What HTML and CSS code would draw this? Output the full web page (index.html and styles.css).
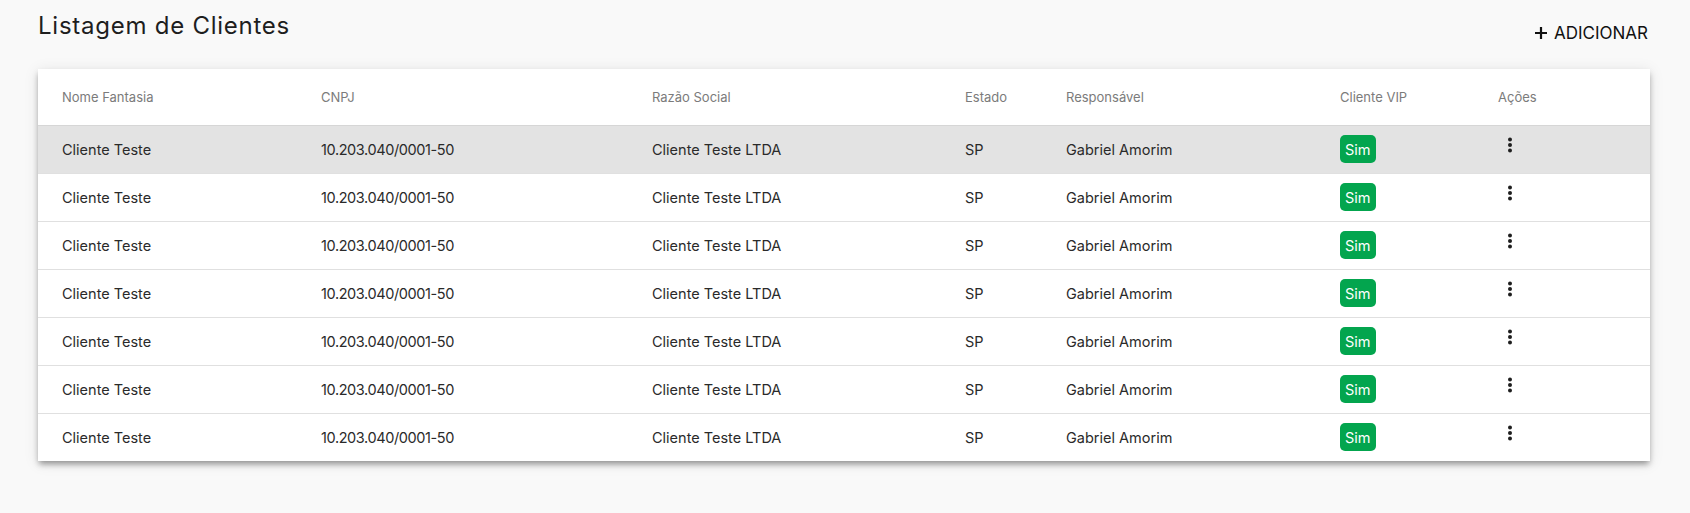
FILE: index.html
```html
<!DOCTYPE html>
<html lang="pt-BR">
<head>
<meta charset="utf-8">
<title>Listagem de Clientes</title>
<link rel="stylesheet" href="styles.css">
</head>
<body>
<main class="page">
  <header class="top">
    <h1 class="title">Listagem de Clientes</h1>
    <button class="add-btn" type="button">
      <svg class="plus" width="12" height="12" viewBox="0 0 12 12" aria-hidden="true"><path d="M6 0v12M0 6h12" stroke="#111" stroke-width="2.2"/></svg>
      <span>ADICIONAR</span>
    </button>
  </header>
  <section class="card">
    <table class="grid">
      <colgroup>
        <col class="c1"><col class="c2"><col class="c3"><col class="c4"><col class="c5"><col class="c6"><col class="c7">
      </colgroup>
      <thead>
        <tr><th>Nome Fantasia</th><th>CNPJ</th><th>Razão Social</th><th>Estado</th><th>Responsável</th><th>Cliente VIP</th><th>Ações</th></tr>
      </thead>
      <tbody>
        <tr class="active"><td>Cliente Teste</td><td class="num">10.203.040/0001-50</td><td>Cliente Teste LTDA</td><td>SP</td><td>Gabriel Amorim</td><td><span class="badge">Sim</span></td><td><svg class="more" width="24" height="24" viewBox="0 0 24 24"><circle cx="12" cy="6.5" r="2"/><circle cx="12" cy="12" r="2"/><circle cx="12" cy="17.5" r="2"/></svg></td></tr>
        <tr><td>Cliente Teste</td><td class="num">10.203.040/0001-50</td><td>Cliente Teste LTDA</td><td>SP</td><td>Gabriel Amorim</td><td><span class="badge">Sim</span></td><td><svg class="more" width="24" height="24" viewBox="0 0 24 24"><circle cx="12" cy="6.5" r="2"/><circle cx="12" cy="12" r="2"/><circle cx="12" cy="17.5" r="2"/></svg></td></tr>
        <tr><td>Cliente Teste</td><td class="num">10.203.040/0001-50</td><td>Cliente Teste LTDA</td><td>SP</td><td>Gabriel Amorim</td><td><span class="badge">Sim</span></td><td><svg class="more" width="24" height="24" viewBox="0 0 24 24"><circle cx="12" cy="6.5" r="2"/><circle cx="12" cy="12" r="2"/><circle cx="12" cy="17.5" r="2"/></svg></td></tr>
        <tr><td>Cliente Teste</td><td class="num">10.203.040/0001-50</td><td>Cliente Teste LTDA</td><td>SP</td><td>Gabriel Amorim</td><td><span class="badge">Sim</span></td><td><svg class="more" width="24" height="24" viewBox="0 0 24 24"><circle cx="12" cy="6.5" r="2"/><circle cx="12" cy="12" r="2"/><circle cx="12" cy="17.5" r="2"/></svg></td></tr>
        <tr><td>Cliente Teste</td><td class="num">10.203.040/0001-50</td><td>Cliente Teste LTDA</td><td>SP</td><td>Gabriel Amorim</td><td><span class="badge">Sim</span></td><td><svg class="more" width="24" height="24" viewBox="0 0 24 24"><circle cx="12" cy="6.5" r="2"/><circle cx="12" cy="12" r="2"/><circle cx="12" cy="17.5" r="2"/></svg></td></tr>
        <tr><td>Cliente Teste</td><td class="num">10.203.040/0001-50</td><td>Cliente Teste LTDA</td><td>SP</td><td>Gabriel Amorim</td><td><span class="badge">Sim</span></td><td><svg class="more" width="24" height="24" viewBox="0 0 24 24"><circle cx="12" cy="6.5" r="2"/><circle cx="12" cy="12" r="2"/><circle cx="12" cy="17.5" r="2"/></svg></td></tr>
        <tr class="last"><td>Cliente Teste</td><td class="num">10.203.040/0001-50</td><td>Cliente Teste LTDA</td><td>SP</td><td>Gabriel Amorim</td><td><span class="badge">Sim</span></td><td><svg class="more" width="24" height="24" viewBox="0 0 24 24"><circle cx="12" cy="6.5" r="2"/><circle cx="12" cy="12" r="2"/><circle cx="12" cy="17.5" r="2"/></svg></td></tr>
      </tbody>
    </table>
  </section>
</main>
</body>
</html>
```

FILE: styles.css
```css
* { box-sizing: border-box; }
html, body { margin: 0; padding: 0; }
body {
  background: #f9f9f9;
  font-family: Inter, "Open Sans", "Liberation Sans", sans-serif;
  color: #2a2a2a;
}
.page {
  padding: 0 40px 52px 38px;
}
.top {
  display: flex;
  justify-content: space-between;
  align-items: flex-start;
  height: 69px;
}
.title {
  margin: 0;
  padding-top: 8px;
  font-size: 24px;
  line-height: 36px;
  font-weight: 400;
  color: #1e1e1e;
  letter-spacing: 0.75px;
}
.add-btn {
  display: flex;
  align-items: center;
  gap: 7px;
  margin: 23px 2px 0 0;
  padding: 0;
  border: 0;
  background: none;
  font-family: inherit;
  font-size: 17px;
  line-height: 20px;
  font-weight: 400;
  color: #111;
  cursor: pointer;
}
.plus { display: block; }
.card {
  position: relative;
  background: #fff;
  box-shadow: 0 4px 6px -1px rgba(0,0,0,0.38), 0 2px 14px rgba(0,0,0,0.1);
}
.grid {
  width: 100%;
  border-collapse: collapse;
  table-layout: fixed;
}
.c1 { width: 283px; }
.c2 { width: 331px; }
.c3 { width: 313px; }
.c4 { width: 101px; }
.c5 { width: 274px; }
.c6 { width: 158px; }
.grid th, .grid td {
  padding: 0;
  text-align: left;
  white-space: nowrap;
}
.grid th:first-child, .grid td:first-child { padding-left: 24px; }
.grid th {
  height: 56px;
  font-size: 13px;
  font-weight: 400;
  color: #7b7b7b;
  border-bottom: 1px solid #d6d6d6;
}
.grid td {
  height: 48px;
  font-size: 14.5px;
  color: #2a2a2a;
  border-bottom: 1px solid #e0e0e0;
}
.grid tr.last td { border-bottom: 0; height: 48px; }
.grid td.num { letter-spacing: -0.4px; }
.grid tr.active td { background: #e3e3e3; }
.badge {
  display: inline-flex;
  align-items: center;
  height: 28px;
  padding: 0 5px;
  border-radius: 5px;
  background: #03a54e;
  color: #fff;
  font-size: 14.5px;
  vertical-align: middle;
}
.more {
  display: block;
  fill: #1e1e1e;
  margin-top: -8px;
}
```
